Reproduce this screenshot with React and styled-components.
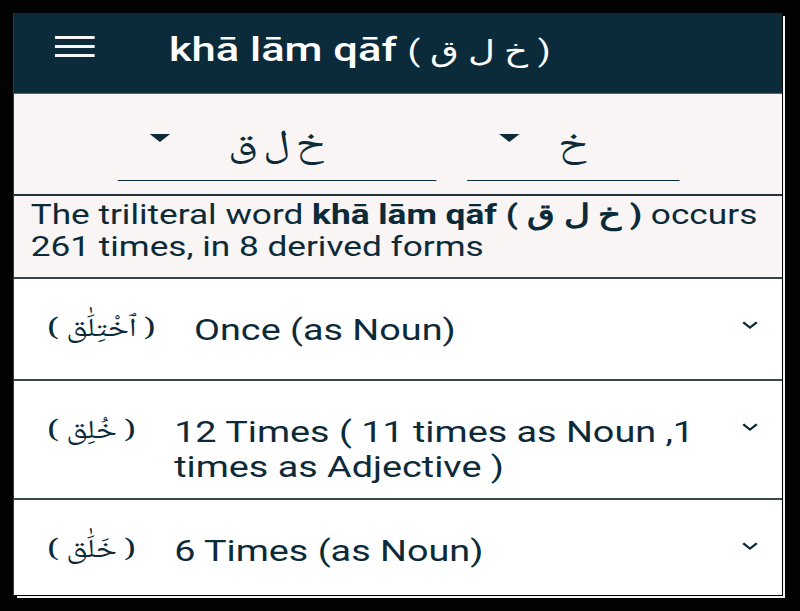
import React from 'react'
import styled, { createGlobalStyle } from 'styled-components'

// the capture is wider than the phone layout, so the screen is laid out narrow and stretched
const STRETCH = 1.28
const SCREEN_W = 768

const ink = '#0d2a39'
const paper = '#f8f5f4'
const arabic = '"Noto Naskh Arabic", "Noto Sans Arabic", "DejaVu Sans", sans-serif'

const GlobalStyle = createGlobalStyle`
  html, body {
    margin: 0;
    padding: 0;
    background: #030303;
  }
  body {
    font-family: Roboto, "Noto Sans", sans-serif;
    color: ${ink};
  }
`

const Frame = styled.div`
  width: 800px;
  height: 611px;
  box-sizing: border-box;
  padding: 13px 0 0 14px;
  background: #030303;
  overflow: hidden;
`

const Screen = styled.div`
  width: ${SCREEN_W}px;
  height: 582px;
  background: #fff;
  overflow: hidden;
  box-shadow: -1px 0 0 #3a3a3a, 1px 1px 0 #000, 3px 3px 0 #f4f4f4;
`

const Stretch = styled.div`
  width: ${SCREEN_W / STRETCH}px;
  transform: scaleX(${STRETCH});
  transform-origin: 0 0;
`

const TopBar = styled.header`
  height: 81px;
  box-sizing: border-box;
  padding: 16px 0 0 32px;
  display: flex;
  align-items: flex-start;
  gap: 58px;
  background: #0b2b3b;
  border-bottom: 1px solid #4f6673;
  color: #fff;
`

const Burger = styled.div`
  margin-top: 7px;
  width: 31px;
  display: flex;
  flex-direction: column;
  gap: 6px;

  span {
    height: 3px;
    background: #f5f5f5;
  }
`

const Title = styled.h1`
  margin: 0;
  font-size: 34px;
  line-height: 40px;
  font-weight: 500;
  white-space: nowrap;
`

const TitleRoot = styled.span`
  font-size: 29px;
  font-weight: 400;
`

const Pickers = styled.section`
  height: 102px;
  box-sizing: border-box;
  padding-bottom: 13px;
  display: flex;
  justify-content: center;
  align-items: flex-end;
  gap: 24px;
  background: ${paper};
  border-bottom: 2px solid #22333d;
`

const Picker = styled.div`
  width: ${p => p.$width}px;
  height: 59px;
  display: grid;
  align-items: start;
  border-bottom: 1.5px solid ${ink};
`

const Caret = styled.span`
  grid-area: 1 / 1;
  justify-self: start;
  margin: 13px 0 0 25px;
  width: 0;
  height: 0;
  border-left: 8.5px solid transparent;
  border-right: 8.5px solid transparent;
  border-top: 8px solid ${ink};
`

const PickerValue = styled.span`
  grid-area: 1 / 1;
  justify-self: center;
  font-family: ${arabic};
  font-size: 36px;
  line-height: 54px;
`

const Summary = styled.p`
  margin: 0;
  height: 83px;
  box-sizing: border-box;
  padding: 3px 13px 0;
  font-size: 27.5px;
  line-height: 32px;
  background: ${paper};
  border-bottom: 2px solid #34444d;

  b {
    font-weight: 700;
  }
`

const Item = styled.div`
  min-height: 102px;
  box-sizing: border-box;
  padding: 34px 13px 13px 26px;
  display: flex;
  align-items: flex-start;
  gap: 30px;
  background: #fff;
  border-bottom: 2px solid #3a4850;
`

const Word = styled.span`
  flex: none;
  font-family: ${arabic};
  font-size: 26px;
  line-height: 35px;
  white-space: nowrap;
`

const Label = styled.span`
  flex: 1;
  font-size: 29.5px;
  line-height: 35px;
`

const Chevron = styled.svg`
  flex: none;
  width: 24px;
  height: 24px;
  margin-top: 0;
  fill: ${ink};
`

const ExpandMore = () => (
  <Chevron viewBox="0 0 24 24">
    <path d="M16.59 8.59L12 13.17 7.41 8.59 6 10l6 6 6-6z" />
  </Chevron>
)

const forms = [
  { word: '( ٱخْتِلَٰق )', label: 'Once (as Noun)' },
  { word: '( خُلِق )', label: '12 Times ( 11 times as Noun ,1 times as Adjective )' },
  { word: '( خَلَٰق )', label: '6 Times (as Noun)' },
]

export default function App() {
  return (
    <>
      <GlobalStyle />
      <Frame>
        <Screen>
          <Stretch>
            <TopBar>
              <Burger>
                <span />
                <span />
                <span />
              </Burger>
              <Title>
                khā lām qāf <TitleRoot>( خ ل ق )</TitleRoot>
              </Title>
            </TopBar>

            <Pickers>
              <Picker $width={249}>
                <Caret />
                <PickerValue>{'خ\u2009ل\u2009ق'}</PickerValue>
              </Picker>
              <Picker $width={166}>
                <Caret />
                <PickerValue>خ</PickerValue>
              </Picker>
            </Pickers>

            <Summary>
              The triliteral word <b>khā lām qāf ( خ ل ق )</b> occurs 261 times, in 8 derived forms
            </Summary>

            {forms.map(f => (
              <Item key={f.label}>
                <Word>{f.word}</Word>
                <Label>{f.label}</Label>
                <ExpandMore />
              </Item>
            ))}
          </Stretch>
        </Screen>
      </Frame>
    </>
  )
}
